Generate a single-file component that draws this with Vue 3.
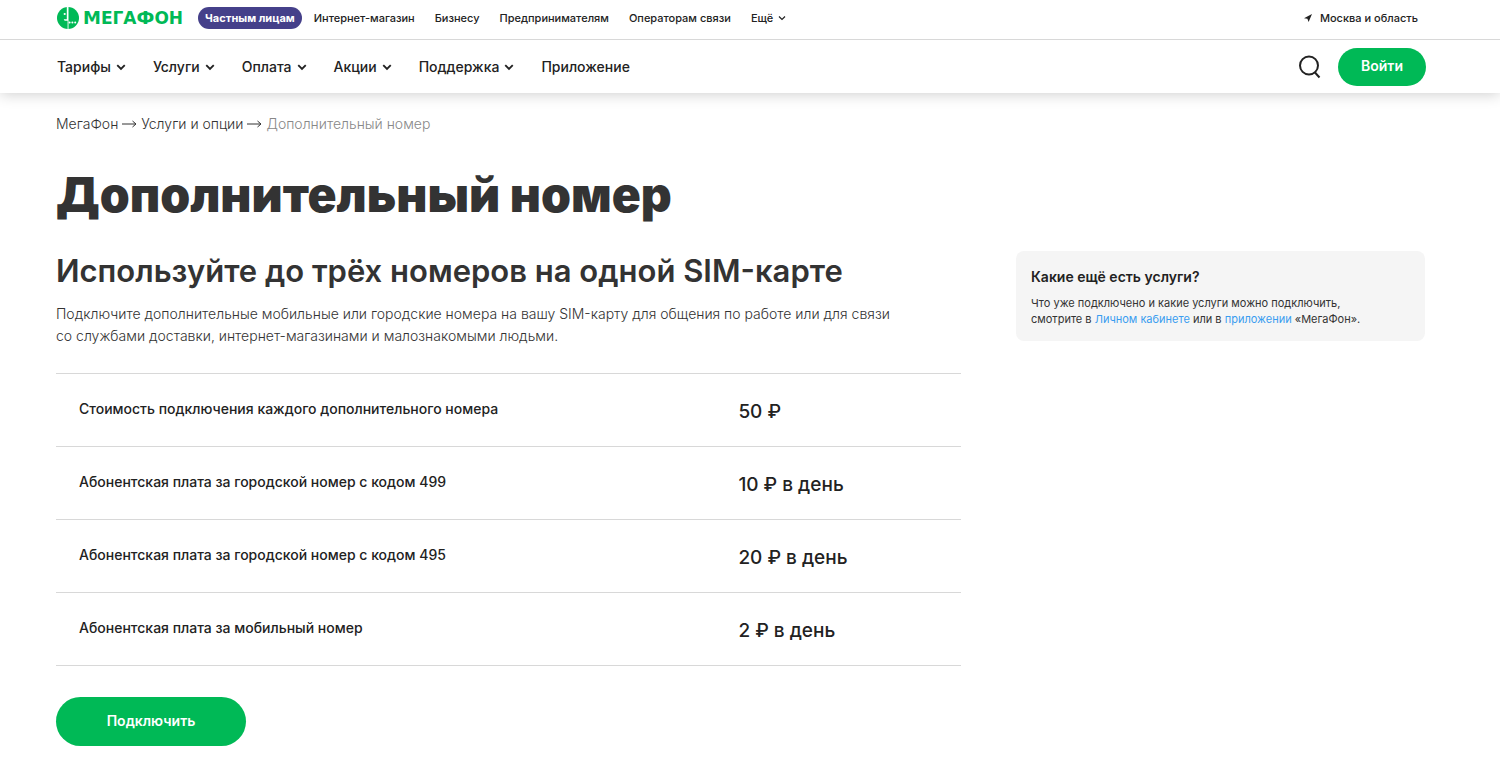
<script setup>
const audiences = ['Интернет-магазин', 'Бизнесу', 'Предпринимателям', 'Операторам связи']

const sections = [
  { label: 'Тарифы', menu: true },
  { label: 'Услуги', menu: true },
  { label: 'Оплата', menu: true },
  { label: 'Акции', menu: true },
  { label: 'Поддержка', menu: true },
  { label: 'Приложение', menu: false }
]

const prices = [
  { name: 'Стоимость подключения каждого дополнительного номера', value: '50 ₽' },
  { name: 'Абонентская плата за городской номер с кодом 499', value: '10 ₽ в день' },
  { name: 'Абонентская плата за городской номер с кодом 495', value: '20 ₽ в день' },
  { name: 'Абонентская плата за мобильный номер', value: '2 ₽ в день' }
]
</script>

<template>
  <div class="page">
    <header class="header">
      <div class="topbar">
        <a class="logo" href="#" aria-label="МегаФон">
          <svg class="logo-mark" viewBox="0 0 22 22" aria-hidden="true">
            <circle cx="11" cy="11" r="11" fill="#00b956" />
            <path d="M9.800 0h1.700v22h-.9v-8.200H8.800c-1.100 0-1.800-.6-2-1.600h3z" fill="#fff" />
            <circle cx="7.700" cy="7" r="1.100" fill="#fff" />
            <circle cx="12.600" cy="15.500" r="1" fill="#fff" />
            <circle cx="15.400" cy="15.500" r="1" fill="#fff" />
            <circle cx="18.200" cy="15.500" r="1" fill="#fff" />
          </svg>
          <span class="logo-name">М<small>ега</small>Ф<small>он</small></span>
        </a>
        <nav class="audiences" aria-label="Разделы сайта">
          <a class="pill" href="#" aria-current="page">Частным лицам</a>
          <a v-for="item in audiences" :key="item" href="#">{{ item }}</a>
          <button class="more" type="button">
            Ещё
            <svg class="chevron small" viewBox="0 0 8 6" aria-hidden="true"><path d="M1 1.500l3 3 3-3" /></svg>
          </button>
        </nav>
        <a class="region" href="#">
          <svg class="region-icon" viewBox="0 0 8 8" aria-hidden="true"><path d="M8 0L0 4.300l3.400.5L4.600 8z" fill="#222" /></svg>
          Москва и область
        </a>
      </div>
      <div class="navbar">
        <nav class="sections" aria-label="Основное меню">
          <a v-for="item in sections" :key="item.label" href="#">
            {{ item.label }}
            <svg v-if="item.menu" class="chevron" viewBox="0 0 8 6" aria-hidden="true"><path d="M1 1.500l3 3 3-3" /></svg>
          </a>
        </nav>
        <button class="search" type="button" aria-label="Поиск">
          <svg viewBox="0 0 22 24" aria-hidden="true">
            <circle cx="10" cy="10.500" r="9" />
            <path d="M15.500 17l5 5.500" />
          </svg>
        </button>
        <button class="button login" type="button">Войти</button>
      </div>
    </header>

    <main class="main">
      <nav class="crumbs" aria-label="Навигационная цепочка">
        <a href="#">МегаФон</a>
        <svg class="arrow" viewBox="0 0 15 8" aria-hidden="true"><path d="M0 4h13.500M10.500 1l3.500 3-3.500 3" /></svg>
        <a href="#">Услуги и опции</a>
        <svg class="arrow" viewBox="0 0 15 8" aria-hidden="true"><path d="M0 4h13.500M10.500 1l3.500 3-3.500 3" /></svg>
        <span>Дополнительный номер</span>
      </nav>
      <h1>Дополнительный номер</h1>
      <div class="columns">
        <section class="content">
          <h2>Используйте до трёх номеров на одной SIM-карте</h2>
          <p class="lead">
            Подключите дополнительные мобильные или городские номера на вашу SIM-карту для общения по работе или для связи<br>
            со службами доставки, интернет-магазинами и малознакомыми людьми.
          </p>
          <table class="prices">
            <tbody>
              <tr v-for="row in prices" :key="row.name">
                <th scope="row">{{ row.name }}</th>
                <td>{{ row.value }}</td>
              </tr>
            </tbody>
          </table>
          <button class="button connect" type="button">Подключить</button>
        </section>
        <aside class="card">
          <h3>Какие ещё есть услуги?</h3>
          <p>
            Что уже подключено и какие услуги можно подключить,<br>
            смотрите в <a href="#">Личном кабинете</a> или в <a href="#">приложении</a> «МегаФон».
          </p>
        </aside>
      </div>
    </main>
  </div>
</template>

<style>
body {
  margin: 0;
  background: #fff;
}
</style>

<style scoped>
.page {
  font-family: Inter, "Liberation Sans", sans-serif;
  color: #333;
}

a {
  color: inherit;
  text-decoration: none;
}

button {
  border: 0;
  padding: 0;
  background: none;
  color: inherit;
  font: inherit;
  cursor: pointer;
}

h1,
h2,
h3,
p {
  margin: 0;
}

.header {
  background: #fff;
  color: #222;
  box-shadow: 0 1px 14px rgba(0, 0, 0, 0.2);
}

.topbar {
  display: flex;
  align-items: center;
  box-sizing: border-box;
  height: 40px;
  padding: 0 82px 3px 57px;
  border-bottom: 1px solid #d8d8d8;
  font-size: 11px;
  font-weight: 500;
}

.logo {
  display: flex;
  align-items: center;
  gap: 4px;
  margin-right: 15px;
}

.logo-mark {
  width: 22px;
  height: 22px;
}

.logo-name {
  color: #00b956;
  font-family: "DejaVu Sans", sans-serif;
  font-size: 18px;
  font-weight: 700;
  line-height: 22px;
  text-transform: uppercase;
}

.logo-name small {
  font-size: 17px;
}

.audiences {
  display: flex;
  align-items: center;
  gap: 20px;
}

.pill {
  margin-right: -8px;
  padding: 0 7px;
  border-radius: 11px;
  background: #45408a;
  color: #fff;
  font-weight: 700;
  line-height: 22px;
}

.more {
  display: flex;
  align-items: center;
  gap: 5px;
}

.chevron {
  width: 10px;
  height: 8px;
  fill: none;
  stroke: #222;
  stroke-width: 1.5;
}

.chevron.small {
  width: 8px;
  height: 6px;
  stroke-width: 1.2;
}

.region {
  display: flex;
  align-items: center;
  gap: 8px;
  margin-left: auto;
}

.region-icon {
  width: 8px;
  height: 8px;
}

.navbar {
  display: flex;
  align-items: center;
  height: 53px;
  padding: 0 74px 0 57px;
}

.sections {
  display: flex;
  gap: 27px;
  margin-right: auto;
  font-size: 14px;
  font-weight: 500;
}

.sections a {
  display: flex;
  align-items: center;
  gap: 5px;
}

.search {
  width: 22px;
  height: 24px;
  margin-right: 17px;
}

.search svg {
  display: block;
  width: 22px;
  height: 24px;
  fill: none;
  stroke: #222;
  stroke-width: 2;
}

.button {
  padding-bottom: 2px;
  border-radius: 25px;
  background: #00b956;
  color: #fff;
  font-size: 14px;
  font-weight: 600;
}

.login {
  width: 88px;
  height: 38px;
}

.main {
  padding: 22px 75px 22px 56px;
}

.crumbs {
  display: flex;
  align-items: center;
  gap: 4px;
  font-size: 14px;
  font-weight: 300;
  line-height: 18px;
}

.crumbs span {
  color: #888;
}

.arrow {
  width: 15px;
  height: 8px;
  fill: none;
  stroke: #333;
}

h1 {
  margin-top: 32px;
  font-size: 48px;
  font-weight: 900;
  line-height: 60px;
}

.columns {
  display: grid;
  grid-template-columns: 905fr 409fr;
  align-items: start;
  gap: 55px;
  margin-top: 26px;
}

h2 {
  font-size: 31px;
  font-weight: 600;
  line-height: 40px;
}

.lead {
  margin-top: 12px;
  font-size: 14px;
  font-weight: 300;
  line-height: 22px;
  white-space: nowrap;
}

.prices {
  width: 100%;
  margin-top: 26px;
  border-collapse: collapse;
  color: #222;
}

.prices tr {
  border-top: 1px solid #d8d8d8;
  border-bottom: 1px solid #d8d8d8;
}

.prices th {
  height: 73px;
  padding: 0 0 4px 23px;
  box-sizing: border-box;
  font-size: 14px;
  font-weight: 500;
  text-align: left;
}

.prices td {
  width: 24.6%;
  padding: 2px 0 0;
  font-size: 19px;
  font-weight: 500;
}

.connect {
  width: 190px;
  height: 49px;
  margin-top: 31px;
}

.card {
  padding: 15px 15px 14px;
  border-radius: 8px;
  background: #f5f5f5;
}

.card h3 {
  color: #222;
  font-size: 14px;
  font-weight: 600;
  line-height: 22px;
}

.card p {
  margin-top: 7px;
  font-size: 11px;
  line-height: 16px;
}

.card a {
  color: #3a9df0;
}
</style>
